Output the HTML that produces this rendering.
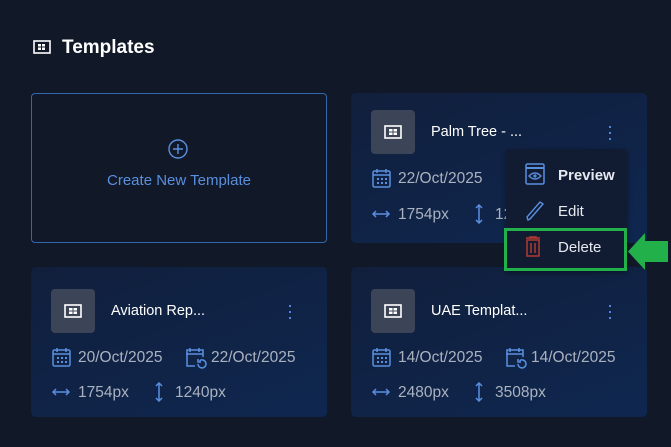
<!DOCTYPE html>
<html><head><meta charset="utf-8"><style>
*{margin:0;padding:0;box-sizing:border-box}
body{width:671px;height:447px;background:#111827;font-family:"Liberation Sans",sans-serif;position:relative;overflow:hidden}
.a{position:absolute}
.card{position:absolute;width:296px;height:150px;border-radius:5px;background:linear-gradient(160deg,#111f3c 0%,#0f2750 100%)}
.ib{position:absolute;left:20px;width:44px;height:44px;border-radius:4px;background:#3b4557}
.ib svg{position:absolute;left:13px;top:15px}
.t{position:absolute;left:80px;color:#fff;font-size:14.5px;line-height:17px}
.k{position:absolute;left:258px;width:2px}
.k i{display:block;width:2px;height:2px;background:#4f86dc;margin-bottom:4px}
.tx{position:absolute;color:#aab2bf;font-size:15.5px;line-height:17px}
.ic{position:absolute}
</style></head><body>
<svg class="a" style="left:33px;top:40px" width="18" height="14" viewBox="0 0 18 14"><rect x="1" y="1" width="16" height="12" fill="none" stroke="#fff" stroke-width="1.6"/><rect x="5" y="4" width="3" height="2.5" fill="#fff"/><rect x="9" y="4" width="3" height="2.5" fill="#fff"/><rect x="5" y="7.5" width="3" height="2.5" fill="#fff"/><rect x="9" y="7.5" width="3" height="2.5" fill="#fff"/></svg>
<div class="a" style="left:62px;top:37px;color:#fff;font-size:19px;font-weight:bold;line-height:22px">Templates</div>

<div class="a" style="left:31px;top:93px;width:296px;height:150px;border:1px solid #3564b0;border-radius:4px"></div>
<svg class="a" style="left:168px;top:139px" width="20" height="20" viewBox="0 0 20 20"><circle cx="10" cy="10" r="9" fill="none" stroke="#5a8fe0" stroke-width="1.4"/><path d="M10 5v10M5 10h10" stroke="#5a8fe0" stroke-width="1.4"/></svg>
<div class="a" style="left:31px;top:172px;width:296px;text-align:center;color:#5a8fe0;font-size:15px;line-height:17px">Create New Template</div>

<div class="card" style="left:351px;top:93px">
 <div class="ib" style="top:17px"><svg width="18" height="14" viewBox="0 0 18 14"><rect x="1" y="1" width="16" height="12" fill="none" stroke="#fff" stroke-width="1.6"/><rect x="5" y="4" width="8" height="6" fill="#fff"/><path d="M9 4v6M5 7h8" stroke="#3b4557"/></svg></div>
 <div class="t" style="top:31px">Palm Tree - ...</div>
 <div class="k" style="top:33px"><i></i><i></i><i></i></div>
 <svg class="ic" style="left:21px;top:75px" width="19" height="20" viewBox="0 0 19 20"><rect x="1" y="3" width="17" height="16" rx="1.5" fill="none" stroke="#5a8fe0" stroke-width="1.5"/><path d="M1 7h17M5 1v4M14 1v4" stroke="#5a8fe0" stroke-width="1.5"/><g fill="#5a8fe0"><rect x="5" y="10" width="2" height="2"/><rect x="9" y="10" width="2" height="2"/><rect x="13" y="10" width="2" height="2"/><rect x="5" y="14" width="2" height="2"/><rect x="9" y="14" width="2" height="2"/><rect x="13" y="14" width="2" height="2"/></g></svg>
 <div class="tx" style="left:47px;top:77px">22/Oct/2025</div>
 <svg class="ic" style="left:21px;top:116px" width="18" height="10" viewBox="0 0 18 10"><path d="M1 5h16M4 2L1 5l3 3M14 2l3 3-3 3" fill="none" stroke="#5a8fe0" stroke-width="1.5"/></svg>
 <div class="tx" style="left:47px;top:113px">1754px</div>
 <svg class="ic" style="left:123px;top:111px" width="10" height="20" viewBox="0 0 10 20"><path d="M5 1v18M2 4l3-3 3 3M2 16l3 3 3-3" fill="none" stroke="#5a8fe0" stroke-width="1.5"/></svg>
 <div class="tx" style="left:144px;top:113px">1240px</div>
</div>

<div class="card" style="left:31px;top:267px">
 <div class="ib" style="top:22px"><svg width="18" height="14" viewBox="0 0 18 14"><rect x="1" y="1" width="16" height="12" fill="none" stroke="#fff" stroke-width="1.6"/><rect x="5" y="4" width="8" height="6" fill="#fff"/><path d="M9 4v6M5 7h8" stroke="#3b4557"/></svg></div>
 <div class="t" style="top:36px">Aviation Rep...</div>
 <div class="k" style="top:38px"><i></i><i></i><i></i></div>
 <svg class="ic" style="left:21px;top:80px" width="19" height="20" viewBox="0 0 19 20"><rect x="1" y="3" width="17" height="16" rx="1.5" fill="none" stroke="#5a8fe0" stroke-width="1.5"/><path d="M1 7h17M5 1v4M14 1v4" stroke="#5a8fe0" stroke-width="1.5"/><g fill="#5a8fe0"><rect x="5" y="10" width="2" height="2"/><rect x="9" y="10" width="2" height="2"/><rect x="13" y="10" width="2" height="2"/><rect x="5" y="14" width="2" height="2"/><rect x="9" y="14" width="2" height="2"/><rect x="13" y="14" width="2" height="2"/></g></svg>
 <div class="tx" style="left:47px;top:82px">20/Oct/2025</div>
 <svg class="ic" style="left:154px;top:80px" width="22" height="22" viewBox="0 0 22 22"><path d="M10 19H2V3h16v7M1 7h17M5 1v4M14 1v4" fill="none" stroke="#5a8fe0" stroke-width="1.5"/><path d="M13 17a4 4 0 1 0 1.5-3.2M13 12v3h3" fill="none" stroke="#5a8fe0" stroke-width="1.5"/></svg>
 <div class="tx" style="left:180px;top:82px">22/Oct/2025</div>
 <svg class="ic" style="left:21px;top:120px" width="18" height="10" viewBox="0 0 18 10"><path d="M1 5h16M4 2L1 5l3 3M14 2l3 3-3 3" fill="none" stroke="#5a8fe0" stroke-width="1.5"/></svg>
 <div class="tx" style="left:47px;top:117px">1754px</div>
 <svg class="ic" style="left:123px;top:115px" width="10" height="20" viewBox="0 0 10 20"><path d="M5 1v18M2 4l3-3 3 3M2 16l3 3 3-3" fill="none" stroke="#5a8fe0" stroke-width="1.5"/></svg>
 <div class="tx" style="left:144px;top:117px">1240px</div>
</div>

<div class="card" style="left:351px;top:267px">
 <div class="ib" style="top:22px"><svg width="18" height="14" viewBox="0 0 18 14"><rect x="1" y="1" width="16" height="12" fill="none" stroke="#fff" stroke-width="1.6"/><rect x="5" y="4" width="8" height="6" fill="#fff"/><path d="M9 4v6M5 7h8" stroke="#3b4557"/></svg></div>
 <div class="t" style="top:36px">UAE Templat...</div>
 <div class="k" style="top:38px"><i></i><i></i><i></i></div>
 <svg class="ic" style="left:21px;top:80px" width="19" height="20" viewBox="0 0 19 20"><rect x="1" y="3" width="17" height="16" rx="1.5" fill="none" stroke="#5a8fe0" stroke-width="1.5"/><path d="M1 7h17M5 1v4M14 1v4" stroke="#5a8fe0" stroke-width="1.5"/><g fill="#5a8fe0"><rect x="5" y="10" width="2" height="2"/><rect x="9" y="10" width="2" height="2"/><rect x="13" y="10" width="2" height="2"/><rect x="5" y="14" width="2" height="2"/><rect x="9" y="14" width="2" height="2"/><rect x="13" y="14" width="2" height="2"/></g></svg>
 <div class="tx" style="left:47px;top:82px">14/Oct/2025</div>
 <svg class="ic" style="left:154px;top:80px" width="22" height="22" viewBox="0 0 22 22"><path d="M10 19H2V3h16v7M1 7h17M5 1v4M14 1v4" fill="none" stroke="#5a8fe0" stroke-width="1.5"/><path d="M13 17a4 4 0 1 0 1.5-3.2M13 12v3h3" fill="none" stroke="#5a8fe0" stroke-width="1.5"/></svg>
 <div class="tx" style="left:180px;top:82px">14/Oct/2025</div>
 <svg class="ic" style="left:21px;top:120px" width="18" height="10" viewBox="0 0 18 10"><path d="M1 5h16M4 2L1 5l3 3M14 2l3 3-3 3" fill="none" stroke="#5a8fe0" stroke-width="1.5"/></svg>
 <div class="tx" style="left:47px;top:117px">2480px</div>
 <svg class="ic" style="left:123px;top:115px" width="10" height="20" viewBox="0 0 10 20"><path d="M5 1v18M2 4l3-3 3 3M2 16l3 3 3-3" fill="none" stroke="#5a8fe0" stroke-width="1.5"/></svg>
 <div class="tx" style="left:144px;top:117px">3508px</div>
</div>

<div class="a" style="left:506px;top:149px;width:121px;height:122px;background:#111c33;border-radius:4px;box-shadow:0 2px 6px rgba(0,0,0,.4)"></div>
<svg class="a" style="left:525px;top:163px" width="20" height="22" viewBox="0 0 20 22"><rect x="1" y="1" width="18" height="20" rx="1.5" fill="none" stroke="#5a8fe0" stroke-width="1.5"/><path d="M1 5h18" stroke="#5a8fe0" stroke-width="2"/><path d="M4 13q6-6 12 0q-6 6-12 0z" fill="none" stroke="#5a8fe0" stroke-width="1.3"/><circle cx="10" cy="13" r="1.6" fill="#5a8fe0"/></svg>
<div class="a" style="left:558px;top:167px;color:#e6e9ef;font-size:15px;font-weight:bold;line-height:17px">Preview</div>
<svg class="a" style="left:525px;top:200px" width="20" height="22" viewBox="0 0 20 22"><path d="M3 20L2 17 15 2l3 2L5 19z" fill="none" stroke="#5a8fe0" stroke-width="1.4"/></svg>
<div class="a" style="left:558px;top:203px;color:#e6e9ef;font-size:15px;line-height:17px">Edit</div>
<div class="a" style="left:504px;top:228px;width:123px;height:43px;border:3px solid #22b04b"></div>
<svg class="a" style="left:525px;top:236px" width="16" height="21" viewBox="0 0 16 21"><path d="M1 2h14M5 2V1h6v1M2 4h12v16H2z" fill="none" stroke="#b23a33" stroke-width="1.5"/><path d="M6 7v10M10 7v10" stroke="#b23a33" stroke-width="1.5"/></svg>
<div class="a" style="left:558px;top:239px;color:#e6e9ef;font-size:15px;line-height:17px">Delete</div>
<svg class="a" style="left:628px;top:232px" width="40" height="39" viewBox="0 0 40 39"><path d="M0 19.5L17 1V9H40V30H17V38z" fill="#22b04b"/></svg>
</body></html>
